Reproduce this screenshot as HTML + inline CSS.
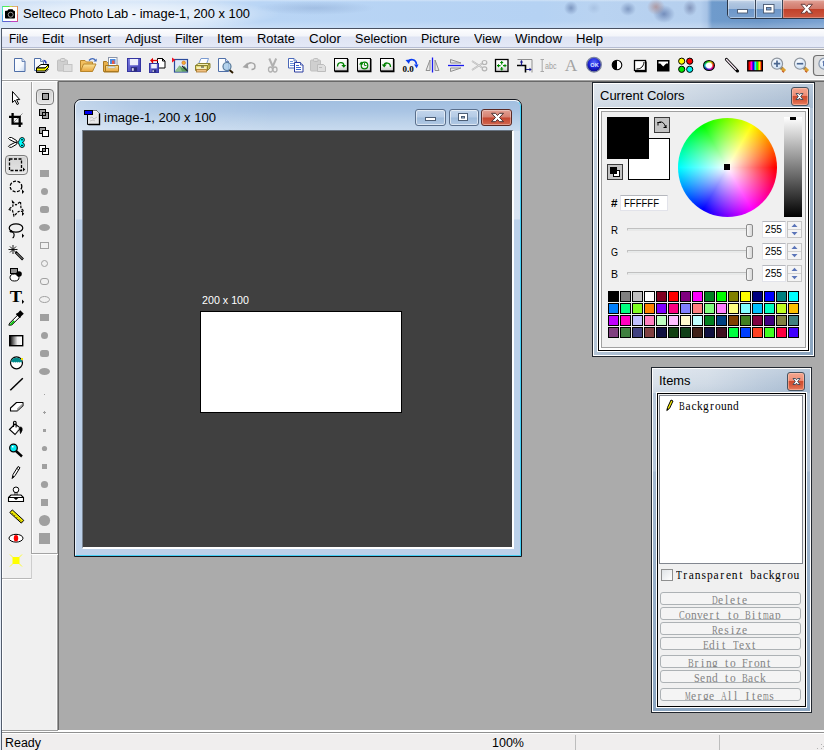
<!DOCTYPE html>
<html><head><meta charset="utf-8">
<style>
*{box-sizing:border-box;margin:0;padding:0}
html,body{width:824px;height:750px;overflow:hidden;background:#ababab;font-family:"Liberation Sans",sans-serif;}
.a{position:absolute}
svg{position:absolute;overflow:visible}

#title{left:0;top:0;width:824px;height:28px;background:
 radial-gradient(ellipse 150px 16px at 130px 14px,rgba(255,255,255,.75),rgba(255,255,255,.4) 60%,rgba(255,255,255,0) 100%),
 radial-gradient(ellipse 7px 7px at 571px 8px,rgba(105,130,175,.75),rgba(105,130,175,0) 100%),
 radial-gradient(ellipse 7px 6px at 594px 8px,rgba(150,175,210,.45),rgba(150,175,210,0) 100%),
 radial-gradient(ellipse 8px 7px at 628px 9px,rgba(105,130,175,.7),rgba(105,130,175,0) 100%),
 radial-gradient(ellipse 9px 8px at 656px 7px,rgba(170,130,130,.7),rgba(170,130,130,0) 100%),
 radial-gradient(ellipse 11px 9px at 664px 14px,rgba(95,120,170,.75),rgba(95,120,170,0) 100%),
 radial-gradient(ellipse 7px 8px at 690px 8px,rgba(110,125,165,.7),rgba(110,125,165,0) 100%),
 radial-gradient(ellipse 60px 7px at 315px 8px,rgba(120,150,195,.35),rgba(120,150,195,0) 100%),
 linear-gradient(rgba(255,255,255,.35) 0,rgba(255,255,255,0) 2px,rgba(255,255,255,0) 21px,rgba(255,255,255,.18) 27px),
 linear-gradient(90deg,#d3e3f6 0,#c9def6 200px,#b9d5f5 260px,#b5d2f3 540px,#b9d3f1 600px,#b5cfee 700px,#a6c2e5 707px,#6f9bcc 712px,#6b96c8 760px,#79a1d1 824px);}
#menubar{left:0;top:28px;width:824px;height:20px;background:linear-gradient(#fdfdfe 0,#f3f5fa 7px,#dfe4f3 8px,#e4e9f6 18px);border-top:1px solid #485060;border-bottom:1px solid #b5bcd2}
#toolbar{left:0;top:48px;width:824px;height:33px;background:linear-gradient(#f0f0f0 0,#f0f0f0 1px,#a0a0a0 1px,#a0a0a0 2px,#fff 2px,#fff 3px,#f0f0f0 3px,#f0f0f0 31px,#fff 31px,#fff 32px,#a0a0a0 32px)}
#tb-bot{display:none}
#lefttools{left:2px;top:81px;width:56px;height:649px;background:#f0f0f0;border-top:1px solid #fff;border-left:1px solid #fff;border-right:1px solid #a0a0a0;box-shadow:inset -1px 0 0 #fafafa}
#work{left:58px;top:81px;width:766px;height:649px;background:#ababab;border-left:1px solid #696969;border-top:1px solid #696969}
#status{left:0;top:730px;width:824px;height:20px;background:linear-gradient(#fff 0,#fff 2px,#909090 2px,#909090 3px,#fff 3px,#fff 4px,#f0eeee 4px);}
.wb{border:1px solid #3c4a5e;border-top:0;box-shadow:inset 0 0 0 1px rgba(255,255,255,.55)}

#doc{left:74px;top:99px;width:448px;height:458px;background:linear-gradient(#d5e2f2 0,#d9e4f2 119px,#bcd1ea 120px);border-radius:7px 7px 0 0;border:1px solid #14181f;overflow:hidden}
#doc .hl{left:0;top:0;right:0;bottom:0;border:1px solid;border-color:#f4f8fc #46d0f6 #46d0f6 #e8f0f9;border-radius:6px 6px 0 0}
#doc .cap{left:1px;top:1px;width:444px;height:30px;border-radius:5px 5px 0 0;background:
  linear-gradient(90deg,rgba(255,255,255,.35) 0,rgba(255,255,255,.15) 60px,rgba(255,255,255,0) 200px),
  linear-gradient(#a2bfe0 0,#aac5e4 35%,#bcd2ea 70%,#c9dbef 100%)}
#canvas{left:7px;top:30px;width:432px;height:419px;background:#404040;border:solid;border-width:1px 2px 2px 1px;border-color:#66717f #fff #fff #7b8796}
.cbtn{height:17px;border:1px solid #5a6f8c;border-radius:3px;background:linear-gradient(#c3d6ec 0,#b4cae5 48%,#9ebbdb 52%,#b2c9e4 100%);box-shadow:inset 0 0 0 1px rgba(255,255,255,.55)}
.cbtn.x{border-color:#5a2a25;background:linear-gradient(#e2a093 0,#d57f70 48%,#c4452f 52%,#d2674f 100%);box-shadow:inset 0 0 0 1px rgba(255,255,255,.35)}

#ledge{left:0;top:28px;width:2px;height:722px;background:linear-gradient(90deg,#e4ecf7 0,#e4ecf7 1px,#525c6c 1px)}
#lgray{left:2px;top:730px;width:56px;height:1px;background:#a0a0a0}
#mline{display:none}
#ltdiv{left:31px;top:82px;width:2px;height:472px;background:linear-gradient(90deg,#a3a3a3 0,#a3a3a3 1px,#fff 1px)}
#lth1{left:32px;top:553px;width:26px;height:2px;background:linear-gradient(#a3a3a3 0,#a3a3a3 1px,#fff 1px)}
#lth2{left:2px;top:578px;width:30px;height:2px;background:linear-gradient(#b8b8b8 0,#b8b8b8 1px,#fff 1px)}
.selbtn{border:1px solid #7c7c7c;border-radius:4px;background:linear-gradient(#d2d2d2,#e6e6e6);box-shadow:inset 0 0 0 1px rgba(255,255,255,.35)}

#hue{left:703px;top:60px;width:12px;height:11px;border-radius:50%;background:radial-gradient(ellipse,#fff 0,#fff 2.6px,rgba(255,255,255,0) 4.2px),conic-gradient(from 90deg,#e00,#c0c,#22c,#0bb,#0b0,#cc0,#e00);border:1px solid #000}

.pnl{border:1px solid #20262e;background:linear-gradient(90deg,rgba(255,255,255,.35) 0,rgba(255,255,255,0) 60%),linear-gradient(#b9c9da 0,#b4c5d8 56px,#a3b8cf 57px,#8ba5c0 100%)}
.pnl .hl{left:0;top:0;right:0;bottom:0;border:1px solid #fff}
.pnl .cap{left:1px;top:1px;right:1px;height:24px;background:linear-gradient(rgba(255,255,255,.18),rgba(255,255,255,0) 60%,rgba(120,150,180,.12)),linear-gradient(90deg,#d9e1ea 0,#d1dbe6 35%,#bccbdc 70%,#acbfd4 100%)}
.pnl .cl{border:1px solid #000;background:#f0f0f0;outline:1px solid #fff}
.pclose{width:18px;height:19px;border:1px solid #45525f;border-radius:3px;background:linear-gradient(#f3a58f 0,#f09880 30%,#ee8670 46%,#cf4c2e 50%,#d4583a 70%,#ea7c5e 100%);box-shadow:inset 0 0 0 1px rgba(255,200,180,.55)}
.bev{left:0;top:0;right:0;bottom:0;border:2px solid #fff}
.bev2{left:2px;top:2px;right:2px;bottom:2px;border:1px solid #a0a0a0}
.sw{width:11px;height:11px;border:1px solid #000}
.inp{background:#fff;border:1px solid #e2e3ea;border-top-color:#b5b7bd}
.trk{height:3px;border:1px solid #c0c0c0;border-bottom-color:#e8e8e8;background:#e7eaea;border-radius:1px}
.thm{width:7px;height:13px;border:1px solid #8c8c8c;border-radius:2px;background:linear-gradient(90deg,#f8f8f8,#d8d8d8)}
.spn{width:15px;height:17px;border:1px solid #c4c4c4;background:#f4f4f4}
.btn{left:2px;width:141px;height:13px;border:1px solid #adb2b5;border-radius:3px;background:#f4f4f4;overflow:hidden}

#wbtn{left:727px;top:-1px;width:98px;height:20px;border:1px solid #2a3648;border-radius:0 0 0 5px;overflow:hidden;background:#7ea3cf}
#wbtn div{position:absolute;top:0;height:18px}
#wbtn .n{background:linear-gradient(#c9d8ea 0,#afc5e0 20%,#a3bcdb 48%,#6d96c8 52%,#7aa0ce 100%);box-shadow:inset 0 0 0 1px rgba(255,255,255,.4)}
#wbtn .c{background:linear-gradient(#e3a79c 0,#d98d80 20%,#d27a6b 48%,#c2412a 52%,#cc5840 100%);box-shadow:inset 0 0 0 1px rgba(255,255,255,.3)}
#wbtn .s{width:1px;background:#3a4658}

</style></head><body>
<div id="title" class="a">
<span class="a" style="left:23px;top:7px;font:12.5px/15px 'Liberation Sans',sans-serif;color:#000;white-space:pre;transform-origin:0 0;transform:scaleX(1.0305);">Selteco Photo Lab - image-1, 200 x 100</span>
</div>
<div id="menubar" class="a">
<span class="a" style="left:9px;top:3px;font:12.5px/15px 'Liberation Sans',sans-serif;color:#000;white-space:pre;transform-origin:0 0;transform:scaleX(0.9433);">File</span>
<span class="a" style="left:42px;top:3px;font:12.5px/15px 'Liberation Sans',sans-serif;color:#000;white-space:pre;transform-origin:0 0;transform:scaleX(1.0214);">Edit</span>
<span class="a" style="left:78px;top:3px;font:12.5px/15px 'Liberation Sans',sans-serif;color:#000;white-space:pre;transform-origin:0 0;transform:scaleX(1.0556);">Insert</span>
<span class="a" style="left:125px;top:3px;font:12.5px/15px 'Liberation Sans',sans-serif;color:#000;white-space:pre;transform-origin:0 0;transform:scaleX(1.0362);">Adjust</span>
<span class="a" style="left:175px;top:3px;font:12.5px/15px 'Liberation Sans',sans-serif;color:#000;white-space:pre;transform-origin:0 0;transform:scaleX(1.0080);">Filter</span>
<span class="a" style="left:217px;top:3px;font:12.5px/15px 'Liberation Sans',sans-serif;color:#000;white-space:pre;transform-origin:0 0;transform:scaleX(1.0695);">Item</span>
<span class="a" style="left:257px;top:3px;font:12.5px/15px 'Liberation Sans',sans-serif;color:#000;white-space:pre;transform-origin:0 0;transform:scaleX(1.0318);">Rotate</span>
<span class="a" style="left:309px;top:3px;font:12.5px/15px 'Liberation Sans',sans-serif;color:#000;white-space:pre;transform-origin:0 0;transform:scaleX(1.0713);">Color</span>
<span class="a" style="left:355px;top:3px;font:12.5px/15px 'Liberation Sans',sans-serif;color:#000;white-space:pre;transform-origin:0 0;transform:scaleX(1.0112);">Selection</span>
<span class="a" style="left:421px;top:3px;font:12.5px/15px 'Liberation Sans',sans-serif;color:#000;white-space:pre;transform-origin:0 0;transform:scaleX(1.0025);">Picture</span>
<span class="a" style="left:474px;top:3px;font:12.5px/15px 'Liberation Sans',sans-serif;color:#000;white-space:pre;transform-origin:0 0;transform:scaleX(1.0049);">View</span>
<span class="a" style="left:515px;top:3px;font:12.5px/15px 'Liberation Sans',sans-serif;color:#000;white-space:pre;transform-origin:0 0;transform:scaleX(1.0572);">Window</span>
<span class="a" style="left:576px;top:3px;font:12.5px/15px 'Liberation Sans',sans-serif;color:#000;white-space:pre;transform-origin:0 0;transform:scaleX(1.0503);">Help</span>
</div>
<div id="toolbar" class="a"></div><div id="tb-bot" class="a"></div>
<div id="lefttools" class="a"></div>
<div id="work" class="a"></div>
<div id="status" class="a">
<span class="a" style="left:5px;top:6px;font:12.5px/15px 'Liberation Sans',sans-serif;color:#000;white-space:pre;transform-origin:0 0;transform:scaleX(0.9963);">Ready</span>
<span class="a" style="left:492px;top:6px;font:12.5px/15px 'Liberation Sans',sans-serif;color:#000;white-space:pre;transform-origin:0 0;transform:scaleX(1.0009);">100%</span>
<div class="a" style="left:575px;top:5px;width:1px;height:15px;background:#bdbdbd"></div><div class="a" style="left:719px;top:5px;width:1px;height:15px;background:#bdbdbd"></div>
<svg style="left:812px;top:8px" width="12" height="12" viewBox="0 0 12 12"><path d="M9 10h1v1h-1zM9 6h1v1h-1zM5 10h1v1h-1zM11 8h1v1h-1z" fill="#b0b0b0"/></svg>
</div>
<div id="doc" class="a"><div class="a cap"></div><div class="a hl"></div>
<svg style="left:9px;top:9px" width="18" height="18" viewBox="0 0 18 18"><path d="M3.5 1.5h9l3 3v11h-12z" fill="#e9e9e9" stroke="#000" stroke-width="1"/><path d="M4 2h8.5l2.5 2.5v10.5" fill="none" stroke="#fff" stroke-width="1"/><path d="M4.5 15.5h11v-11" fill="none" stroke="#000" stroke-width="1.4"/><rect x="0.5" y="1.5" width="8" height="4" fill="#0000f0" stroke="#000"/><path d="M6 9l2-1 2 2 3-2M6 12l3-1 2 1" stroke="#c4c4c4" fill="none"/></svg>
<span class="a" style="left:29px;top:11px;font:12.5px/15px 'Liberation Sans',sans-serif;color:#000;white-space:pre;transform-origin:0 0;transform:scaleX(1.0466);">image-1, 200 x 100</span>
<div class="a cbtn" style="left:340px;top:9px;width:31px"></div>
<div class="a cbtn" style="left:374px;top:9px;width:30px"></div>
<div class="a cbtn x" style="left:406px;top:9px;width:31px"></div>
<svg style="left:340px;top:9px" width="100" height="17" viewBox="0 0 100 17"><rect x="10.5" y="8.5" width="10" height="3" fill="#fff" stroke="#4d5e75"/><rect x="43.500" y="4.500" width="9" height="7" fill="#fff" stroke="#4d5e75"/><rect x="46.5" y="7.5" width="3" height="1.500" fill="#b6cbe5" stroke="#4d5e75"/><path d="M76.500 4.300h4l2 2.200 2-2.200h4l-4 4.200 4 4.200h-4l-2-2.200-2 2.200h-4l4-4.200z" fill="#fff" stroke="#4a3030" stroke-width="1"/></svg>
<div id="canvas" class="a">
<span class="a" style="left:119px;top:163px;font:10.5px/13px 'Liberation Sans',sans-serif;color:#fff;white-space:pre;transform-origin:0 0;transform:scaleX(1.0190);">200 x 100</span>
<div class="a" style="left:117px;top:180px;width:202px;height:102px;background:#fff;border:1px solid #000"></div>
</div></div>
<div id="ledge" class="a"></div><div id="lgray" class="a"></div><div id="mline" class="a"></div><div id="ltdiv" class="a"></div><div id="lth1" class="a"></div><div id="lth2" class="a"></div>
<div class="a" style="left:31px;top:555px;width:1px;height:24px;background:#cdcdcd"></div>
<div class="a selbtn" style="left:5px;top:155px;width:23px;height:20px"></div>
<div class="a selbtn" style="left:36px;top:89px;width:18px;height:16px"></div>
<svg style="left:0;top:0" width="824" height="750" viewBox="0 0 824 750"><rect x="42.5" y="93.5" width="6" height="6" fill="#a0a0a0" stroke="#000" stroke-width="1"/><rect x="39.5" y="109.5" width="6" height="6" fill="#a0a0a0" stroke="#000" stroke-width="1"/><rect x="42.5" y="112.5" width="6" height="6" fill="#a0a0a0" stroke="#000" stroke-width="1"/><rect x="39.5" y="109.5" width="6" height="6" fill="none" stroke="#000" stroke-width="1"/><rect x="39.5" y="127.5" width="6" height="6" fill="#a0a0a0" stroke="#000" stroke-width="1"/><rect x="42.5" y="130.5" width="6" height="6" fill="#fff" stroke="#000" stroke-width="1"/><rect x="39.5" y="145.5" width="6" height="6" fill="#fff" stroke="#000" stroke-width="1"/><rect x="42.5" y="148.5" width="6" height="6" fill="#fff" stroke="#000" stroke-width="1"/><rect x="43" y="149" width="2" height="2" fill="#909090"/><rect x="39.5" y="145.5" width="6" height="6" fill="none" stroke="#000" stroke-width="1"/><rect x="40" y="170" width="9" height="7" rx="0" fill="#a0a0a0"/><ellipse cx="44.500" cy="191.5" rx="3.5" ry="3.5" fill="#a0a0a0"/><rect x="40" y="206" width="9" height="7" rx="2.5" fill="#a0a0a0"/><ellipse cx="44.500" cy="227.5" rx="5.5" ry="3.5" fill="#a0a0a0"/><rect x="40.5" y="242.5" width="8" height="6" rx="0" fill="none" stroke="#a0a0a0"/><ellipse cx="44.500" cy="263.5" rx="3" ry="3" fill="none" stroke="#a0a0a0"/><rect x="40.5" y="278.5" width="8" height="6" rx="2.5" fill="none" stroke="#a0a0a0"/><ellipse cx="44.500" cy="299.5" rx="5" ry="3" fill="none" stroke="#a0a0a0"/><rect x="40" y="314" width="9" height="7" rx="0" fill="#a0a0a0"/><ellipse cx="44.500" cy="335.5" rx="3.5" ry="3.5" fill="#a0a0a0"/><rect x="40" y="350" width="9" height="7" rx="2.5" fill="#a0a0a0"/><ellipse cx="44.500" cy="371.5" rx="5.5" ry="3.5" fill="#a0a0a0"/><rect x="44" y="394" width="1" height="1" fill="#a0a0a0"/><path d="M44 411h1v1h1v1h-1v1h-1v-1h-1v-1h1z" fill="#a0a0a0"/><rect x="43" y="429" width="3" height="3" fill="#a0a0a0"/><circle cx="44.500" cy="448.500" r="2.6" fill="#a0a0a0"/><rect x="42" y="464" width="5" height="5" fill="#a0a0a0"/><circle cx="44.500" cy="484.500" r="3.6" fill="#a0a0a0"/><rect x="41" y="499" width="7" height="7" fill="#a0a0a0"/><circle cx="44.500" cy="520.500" r="5.6" fill="#a0a0a0"/><rect x="39" y="533" width="11" height="11" fill="#a0a0a0"/><path d="M12.500 91.500v11l2.500-2.300 2 4.300 1.600-.7-2-4.200h3.200z" fill="#fff" stroke="#000" stroke-width="1" stroke-linejoin="miter"/><path d="M22.500 113.500L13 123" stroke="#909090" stroke-width="1"/><path d="M12.600 113v10.600H22.500M9 116.800h10.700v10.200" fill="none" stroke="#000" stroke-width="2.300"/><path d="M8.500 138.500l1-1h2l5 3 .8 1.600-2.300.2-5.500-2.800z" fill="#fff" stroke="#000" stroke-width="1"/><path d="M8.500 146.300l1 1h2l5-3 .8-1.600-2.300-.2-5.500 2.800z" fill="#fff" stroke="#000" stroke-width="1"/><path d="M18.300 142.500l1.200-3q.6-2 2.600-2 2.300 0 2.300 2.300 0 2.300-2.200 2.700 2.200.4 2.200 2.700 0 2.300-2.300 2.300-2 0-2.600-2z" fill="#00ffff" stroke="#000" stroke-width=".9"/><rect x="21" y="139.300" width="2" height="1" fill="#000"/><rect x="21" y="144.800" width="2" height="1" fill="#000"/><rect x="9.500" y="159" width="12" height="11.500" fill="none" stroke="#000" stroke-width="1.300" stroke-dasharray="3 1.500"/><path d="M23 167.500l2.200 2-2.200 2z" fill="#000"/><ellipse cx="16" cy="186.500" rx="5.800" ry="5.300" fill="none" stroke="#000" stroke-width="1.300" stroke-dasharray="3 1.500"/><path d="M22 189.500l2.200 2.200-2.200 2.200z" fill="#000"/><path d="M12.500 201.500l3.500 3.500 4.500-3.500.5 7 3 2.500-5.500.5-4.500 4.500-1.500-5.500-4-1 4.500-3.500z" fill="none" stroke="#000" stroke-width="1.200" stroke-dasharray="2.500 1.200"/><path d="M22 211.500l2.200 2.200-2.200 2.200z" fill="#000"/><ellipse cx="16" cy="228" rx="6.800" ry="4.200" fill="none" stroke="#000" stroke-width="1.200"/><path d="M10.500 231.500c3 .5 4 2 3.500 4.500-.2 1-.8 1.800-1.500 1.500" fill="none" stroke="#000" stroke-width="1.200"/><circle cx="11" cy="231.200" r="1.300" fill="#000"/><path d="M22 233.500l2.200 2.200-2.200 2.200z" fill="#000"/><path d="M13 245v9M8.500 249.500h9M10 246.500l6 6M16 246.500l-6 6" stroke="#000" stroke-width=".9"/><path d="M15.500 252l7.500 7.500" stroke="#000" stroke-width="2.600"/><path d="M16.500 253l6 6" stroke="#d0d0d0" stroke-width=".8"/><rect x="10.500" y="268.500" width="7" height="5" fill="#909090" stroke="#000"/><ellipse cx="14.500" cy="277.500" rx="4.500" ry="3.500" fill="#fff" stroke="#000"/><circle cx="19" cy="274" r="2.800" fill="#000"/><text x="9.800" y="302" font-family="Liberation Serif" font-weight="bold" font-size="17.500" fill="#000" textLength="12.300" lengthAdjust="spacingAndGlyphs">T</text><path d="M22 299.500l2.200 2.200-2.200 2.200z" fill="#000"/><path d="M8.800 325.200l1-2.200 8-8 2 2-8 8z" fill="#fff" stroke="#000" stroke-width="1"/><path d="M9.500 324.500l4.200-4.200 1.200 1.200-3.800 3.800z" fill="#00c000"/><path d="M16.500 313.500l4 4M18 314l2.300-2.500 2.200 2.200-2.400 2.300z" stroke="#000" stroke-width="1.800" fill="#000"/><defs><linearGradient id="gr1"><stop offset="0" stop-color="#000"/><stop offset=".25" stop-color="#666"/><stop offset=".6" stop-color="#eee"/><stop offset="1" stop-color="#fff"/></linearGradient></defs><rect x="9.700" y="335.700" width="13" height="10" fill="url(#gr1)" stroke="#000" stroke-width="1.400"/><circle cx="16.500" cy="362.800" r="6" fill="#fff" stroke="#000" stroke-width="1.200"/><path d="M10.800 361.800a6 6 0 0 1 11.400 0l-1 .9-1-.9-1 .9-1-.9-1 .9-1-.9-1 .9-1-.9-1 .9-1-.9z" fill="#008a8a"/><rect x="21" y="358" width="2" height="2" fill="#f0e000"/><path d="M10.300 390.300L22.800 378.300" stroke="#000" stroke-width="1.500"/><path d="M10.500 408l6-5.500h6.500v3l-6 5.500h-6.500z" fill="#fff" stroke="#000" stroke-width="1.100" stroke-linejoin="round"/><path d="M17 408.500l5.500-5v2.500l-5.500 5z" fill="#a0a0a0"/><path d="M9.500 429.500l5.500-5.500 5.500 4-5.500 6.500z" fill="#fff" stroke="#000" stroke-width="1.100"/><path d="M16 433l4.500-5.500-1-1z" fill="#a0a0a0"/><path d="M13.500 427v-4.500a1.300 1.300 0 0 1 2.600 0v5" fill="none" stroke="#000" stroke-width="1.100"/><path d="M19.500 427.500c2-1 3 0 2.500 3l-1.500 3z" fill="#000" stroke="#000" stroke-width=".8"/><path d="M16 451l6 5.500" stroke="#000" stroke-width="2.400"/><circle cx="13.500" cy="448" r="3.800" fill="#00e8f0" stroke="#000" stroke-width="1.300"/><rect x="12" y="446" width="1.500" height="1.500" fill="#fff"/><path d="M12.200 478.500l.8-4 5-8 2 1.200-5 8z" fill="#fff" stroke="#000" stroke-width="1"/><path d="M12.200 478.500l.6-2.800 1.700 1z" fill="#000"/><path d="M16.800 468.500l2 1.200" stroke="#000" stroke-width=".8"/><circle cx="16" cy="489.800" r="2.800" fill="#fff" stroke="#000"/><rect x="15" y="492.500" width="2" height="3" fill="#fff" stroke="#000" stroke-width=".8"/><path d="M8.500 497.500l2.500-2.500h10l2.500 2.500v4h-15z" fill="#fff" stroke="#000" stroke-width="1.100"/><path d="M8.500 497.500h15" stroke="#000"/><path d="M13 497.500h6l-3 2.500z" fill="#000"/><path d="M9.800 512.600l2.500-2.700 11.500 10.500-2.500 2.700z" fill="#f0e800" stroke="#000" stroke-width="1"/><path d="M12.500 513.500l.7.700M14.500 515.300l.7.700M16.500 517.100l.7.700M18.500 518.900l.7.700M20.300 520.600l.7.700" stroke="#000" stroke-width=".9"/><ellipse cx="16" cy="538.200" rx="7" ry="3.900" fill="#fff" stroke="#000" stroke-width="1"/><ellipse cx="16" cy="538.200" rx="2.200" ry="3.200" fill="#ff0000"/><rect x="12.500" y="557" width="7" height="7" fill="#ffff00"/><path d="M10 554.500l3 3M22 554.500l-3 3M10 566.500l3-3M22 566.500l-3-3" stroke="#ffff00" stroke-width=".8"/></svg>
<div id="hue" class="a"></div>
<svg style="left:0;top:0" width="824" height="750" viewBox="0 0 824 750"><defs>
<linearGradient id="pg" x1="0" y1="0" x2="1" y2="1"><stop offset="0" stop-color="#fff"/><stop offset=".6" stop-color="#f4f8fd"/><stop offset="1" stop-color="#c4d6f0"/></linearGradient>
<linearGradient id="fo" x1="0" y1="0" x2="0" y2="1"><stop offset="0" stop-color="#fbe59a"/><stop offset="1" stop-color="#e8a33a"/></linearGradient>
<linearGradient id="fl" x1="0" y1="0" x2="1" y2="1"><stop offset="0" stop-color="#7a7ae0"/><stop offset="1" stop-color="#3c3cb0"/></linearGradient>
<linearGradient id="bt" x1="0" y1="0" x2="0" y2="1"><stop offset="0" stop-color="#fff"/><stop offset=".6" stop-color="#f4f4f4"/><stop offset="1" stop-color="#c8c8c8"/></linearGradient>
<radialGradient id="ok" cx=".5" cy=".35" r=".65"><stop offset="0" stop-color="#5a6cff"/><stop offset=".55" stop-color="#1c22d8"/><stop offset="1" stop-color="#0a0a80"/></radialGradient>
<radialGradient id="lens" cx=".4" cy=".35" r=".7"><stop offset="0" stop-color="#fff"/><stop offset="1" stop-color="#c6dcf4"/></radialGradient>
<linearGradient id="spec"><stop offset="0" stop-color="#f00"/><stop offset=".12" stop-color="#f00"/><stop offset=".25" stop-color="#f0f"/><stop offset=".4" stop-color="#00f"/><stop offset=".55" stop-color="#0ff"/><stop offset=".7" stop-color="#0f0"/><stop offset=".84" stop-color="#ff0"/><stop offset=".95" stop-color="#f00"/></linearGradient>
</defs><path d="M14.5 58.5h7.5l3 3v10h-10.5z" fill="url(#pg)" stroke="#4f6fa8"/><path d="M22 58.5v3h3" fill="#dbe6f6" stroke="#4f6fa8" stroke-width=".8"/><path d="M34.5 58.5h6l3 3v9h-9z" fill="url(#pg)" stroke="#4f6fa8"/><path d="M40.5 58.5v3h3" fill="#dbe6f6" stroke="#4f6fa8" stroke-width=".8"/><path d="M43.500 60.500c1.500 0 2.500 1 2.500 3" fill="none" stroke="#2b3fc0" stroke-width="1.500"/><path d="M44 64h4l-2 2.500z" fill="#2b3fc0"/><path d="M36.500 68l4.500-3.500h7.500l-3.500 3.500z" fill="#fff" stroke="#000"/><path d="M36.500 68v3h8.500l3.500-3.500v-3l-3.500 3.500z" fill="#f0f000" stroke="#000" stroke-linejoin="round"/><path d="M36.500 71v1.500h8.500l3.500-3.500" fill="none" stroke="#000"/><rect x="57.500" y="60" width="10" height="11" rx="1" fill="#cfcfcf" stroke="#c0c0c0"/><rect x="60.500" y="58.500" width="4.500" height="3" rx="1" fill="#dcdcdc" stroke="#bdbdbd"/><rect x="63.500" y="64.500" width="8.500" height="7" fill="#dedede" stroke="#c4c4c4"/><path d="M80.500 71v-10.500h4.500l1.500 1.500h6v9z" fill="#f2c060" stroke="#b8862c"/><path d="M80.500 71.500l3-7.500h12.500l-3.500 7.500z" fill="url(#fo)" stroke="#b8862c" stroke-linejoin="round"/><path d="M89 60.500c2-2.500 5-2.500 6.500 0" fill="none" stroke="#3f66b8" stroke-width="1.300"/><path d="M93.500 61.500h3.200v-3z" fill="#3f66b8"/><path d="M103.500 71.500v-10h3l1 1h2v9z" fill="#e8b04a" stroke="#a87820"/><rect x="108.500" y="57.500" width="8.500" height="9" fill="#fff" stroke="#8a94a8"/><rect x="110" y="59" width="5.500" height="5" fill="#4a8ae0"/><rect x="112" y="60.500" width="2.500" height="3.500" fill="#e85a4a"/><path d="M105.500 71.500v-6h13v6z" fill="url(#fo)" stroke="#a87820"/><rect x="108" y="66.500" width="7" height="1.500" fill="#eef4ff" stroke="#9aa" stroke-width=".5"/><path d="M104 72h14.500" stroke="#a87820"/><rect x="127.5" y="58.5" width="13" height="13" fill="url(#fl)" stroke="#3434a0"/><rect x="129.907" y="59" width="8.18519" height="6.25926" fill="#eef0fa"/><rect x="130.87" y="67.1667" width="6.25926" height="4.33333" fill="#2a2a7a"/><rect x="131.833" y="68.1296" width="1.92593" height="2.6963" fill="#d8d8f0"/><path d="M157.500 58.500h5l2.500 2.500v7h-7.500z" fill="#fff" stroke="#000"/><path d="M162.500 58.500v2.500h2.500" fill="none" stroke="#000"/><rect x="149.5" y="63.5" width="9" height="9" fill="url(#fl)" stroke="#3434a0"/><rect x="151.167" y="64" width="5.66667" height="4.33333" fill="#eef0fa"/><rect x="151.833" y="69.5" width="4.33333" height="3" fill="#2a2a7a"/><rect x="152.5" y="70.1667" width="1.33333" height="1.86667" fill="#d8d8f0"/><path d="M152 60.500h6" stroke="#e00000" stroke-width="1.300"/><path d="M150 60.500l3-2.800v5.600z" fill="#e00000"/><path d="M152.500 60v3" stroke="#e00000" stroke-width="1.300"/><rect x="174.500" y="59.500" width="13" height="12.500" fill="#dfeaf8" stroke="#2b4a9a" stroke-width="1.200"/><path d="M175 71.500l4.500-6 3 2.500 2-2 3 3.500v2z" fill="#5aa05a"/><path d="M175 71.500l4.500-6 2.500 6z" fill="#8fc08f"/><path d="M182 66l5.500 5" stroke="#223" stroke-width="1.200"/><circle cx="183.700" cy="62.800" r="1.800" fill="#f2b030" stroke="#d06020" stroke-width=".6"/><path d="M172 57.500l3.500 2.500-3.500 2.500z" fill="#f01020"/><path d="M198.500 64l2.500-5.500h7.500l-2 5.500z" fill="#fff" stroke="#7a9ad0"/><path d="M195.500 65.500l3-2h11.500l-2.500 2z" fill="#f2eeb0" stroke="#8a8230"/><path d="M195.500 65.500h12v5h-12z" fill="#e6dc78" stroke="#8a8230"/><path d="M207.500 65.500l2.500-2v4.500l-2.500 2.500z" fill="#c8bc58" stroke="#8a8230"/><rect x="196.500" y="69.500" width="10" height="2.500" fill="#f0c080" stroke="#a87830" stroke-width=".8"/><path d="M197 68h9" stroke="#fff" stroke-width="1"/><rect x="201" y="66.500" width="3" height="1" fill="#3a3a3a"/><path d="M218.5 58.5h7l3 3v10h-10z" fill="url(#pg)" stroke="#4f6fa8"/><path d="M225.5 58.5v3h3" fill="#dbe6f6" stroke="#4f6fa8" stroke-width=".8"/><path d="M229.500 70l3.500 3" stroke="#2a1a00" stroke-width="2"/><circle cx="227" cy="66.500" r="4" fill="#a9cdea" fill-opacity=".85" stroke="#587a9a" stroke-width="1.200"/><path d="M246.500 66c2-4.500 8.500-4 8.500.5 0 2-1.500 3-3.500 3" fill="none" stroke="#a4a4a4" stroke-width="1.500"/><path d="M242.500 67.300l5-4.800 1 6z" fill="#a4a4a4"/><path d="M269.300 58.500l3.700 8.500M276.200 58.500l-3.700 8.500" stroke="#b0b0b0" stroke-width="2"/><ellipse cx="270.500" cy="69.500" rx="2" ry="2.500" fill="#f0f0f0" stroke="#b0b0b0" stroke-width="1.300"/><ellipse cx="275" cy="69.500" rx="2" ry="2.500" fill="#f0f0f0" stroke="#b0b0b0" stroke-width="1.300"/><path d="M288.5 58.5h5.5l2.5 2.5v7h-8z" fill="#fff" stroke="#4a68b8"/><path d="M294 58.5v2.5h2.5" fill="#dbe6f6" stroke="#4a68b8" stroke-width=".8"/><path d="M290 61.500h3M290 63.500h4.500M290 65.500h4.500" stroke="#5a86d8" stroke-width=".9"/><path d="M294.5 62.5h6l2.5 2.5v7h-8.5z" fill="#fff" stroke="#2a3ca0"/><path d="M300.5 62.5v2.5h2.5" fill="#dbe6f6" stroke="#2a3ca0" stroke-width=".8"/><path d="M296 65.500h3M296 67.500h5M296 69.500h5" stroke="#3a66d0" stroke-width="1"/><rect x="310.500" y="60" width="10" height="11" rx="1" fill="#cfcfcf" stroke="#c0c0c0"/><rect x="313.500" y="58.500" width="4.500" height="3" rx="1" fill="#dcdcdc" stroke="#bdbdbd"/><path d="M317.500 64.500h6l2 2v5h-8z" fill="#dedede" stroke="#bcbcbc"/><path d="M319 67.500h3" stroke="#bcbcbc"/><rect x="334.5" y="58.500" width="13" height="12.500" fill="url(#bt)" stroke="#000"/><path d="M347.7 59v12.500h-13" fill="none" stroke="#000" stroke-width="1.600"/><path d="M337.500 66.500c0-5 6-5 6.500-1" fill="none" stroke="#008000" stroke-width="1.300"/><path d="M341.300 65h5l-2.500 2.800z" fill="#008000"/><rect x="357.5" y="58.500" width="13" height="12.500" fill="url(#bt)" stroke="#000"/><path d="M370.7 59v12.500h-13" fill="none" stroke="#000" stroke-width="1.600"/><circle cx="364.500" cy="65.500" r="3.300" fill="none" stroke="#008000" stroke-width="1.200"/><path d="M359 64.500h4.500l-2.300-3z" fill="#008000"/><path d="M364.500 63v2.500h2" fill="none" stroke="#008000" stroke-width=".9"/><rect x="380.5" y="58.500" width="13" height="12.500" fill="url(#bt)" stroke="#000"/><path d="M393.7 59v12.500h-13" fill="none" stroke="#000" stroke-width="1.600"/><path d="M390.500 67c0-5-6-5-6.500-1.500" fill="none" stroke="#008000" stroke-width="1.300"/><path d="M381.700 64.500h5l-2.500 3z" fill="#008000"/><text x="402.500" y="72" font-family="Liberation Serif" font-weight="bold" font-size="9" fill="#000">0.0</text><path d="M408.500 62c1-3.500 7.500-3.500 8 2.500" fill="none" stroke="#0a3cf0" stroke-width="1.600"/><path d="M405.500 60l4.500-.5-1 4.500z" fill="#0a3cf0"/><path d="M414 64.500h4.500l-1.800 3.800z" fill="#0a3cf0"/><path d="M432.500 57.500v15" stroke="#1a1af0" stroke-width="1.300"/><path d="M430 60v10.500h-4z" fill="#e8e8e8" stroke="#909090" stroke-width="1"/><path d="M435 60v10.500h4z" fill="#e8e8e8" stroke="#909090" stroke-width="1"/><path d="M448 65.500h16" stroke="#1a1af0" stroke-width="1.300"/><path d="M450.500 63h10.500l-10.500-3.500z" fill="#e8e8e8" stroke="#909090"/><path d="M450.500 68h10.500l-10.500 3.500z" fill="#e8e8e8" stroke="#909090"/><path d="M472 61l10 6.500M472 70l10-6.500" stroke="#b4b4b4" stroke-width="1.600"/><path d="M472 61l10 6.500M472 70l10-6.500" stroke="#f6f6f6" stroke-width=".5"/><ellipse cx="484.500" cy="62.500" rx="2.300" ry="2" fill="#f0f0f0" stroke="#b4b4b4" stroke-width="1.200"/><ellipse cx="484.500" cy="68.800" rx="2.300" ry="2" fill="#f0f0f0" stroke="#b4b4b4" stroke-width="1.200"/><rect x="495.500" y="59.500" width="12.500" height="12" fill="url(#bt)" stroke="#000" stroke-width="1.300"/><path d="M501.700 61v3.500M501.700 67v3.500M497 65.700h3.500M503 65.700h3.500" stroke="#008a00" stroke-width="1.200"/><path d="M500.200 62.500h3M500.200 69h3M498.500 64.200v3M505 64.200v3" stroke="#008a00" stroke-width="1"/><path d="M517.500 59.500h14.500v13" fill="none" stroke="#909090" stroke-width="1"/><path d="M517 65.500h8.500v7" fill="none" stroke="#000" stroke-width="1.600"/><path d="M521.500 60.500v5M526 69.500h5" stroke="#1a1a90" stroke-width="1.200"/><path d="M519.800 62.500l1.700-2.200 1.700 2.200zM529.500 67.800l2.200 1.700-2.200 1.700z" fill="#1a1a90"/><path d="M540.500 59.500h3.500M540.500 71.500h3.500M542.200 59.500v12" stroke="#a8a8a8" stroke-width="1"/><text x="545" y="69" font-family="Liberation Sans" font-size="8.500" fill="#a0a0a0" textLength="11.500" lengthAdjust="spacingAndGlyphs">abc</text><text x="564.800" y="71" font-family="Liberation Serif" font-size="16.500" fill="#a2a2a2" textLength="12.500" lengthAdjust="spacingAndGlyphs">A</text><circle cx="594" cy="64.700" r="7.300" fill="url(#ok)" stroke="#7c84a0" stroke-width="1.300"/><text x="590.300" y="66.800" font-family="Liberation Sans" font-weight="bold" font-size="5.600" fill="#dfe6ff">OK</text><circle cx="617" cy="65" r="4.800" fill="#fff" stroke="#000" stroke-width="1.100"/><path d="M617 60.200a4.800 4.800 0 0 0 0 9.600z" fill="#000"/><rect x="634.500" y="60.500" width="11" height="10" fill="#fff" stroke="#000" stroke-width="1.300"/><path d="M646 61.500v10h-11" fill="none" stroke="#000" stroke-width="1.300"/><path d="M636.500 69c5 0 7-3 7.500-7" fill="none" stroke="#000" stroke-width="1"/><rect x="657.500" y="60.500" width="11.500" height="10.500" fill="#000" stroke="#000"/><path d="M658.500 61.500h9.500v2h-1.800l-3 3-2.900-3h-1.800z" fill="#fff"/><circle cx="681.7" cy="61.2" r="3.100" fill="#ffff00" stroke="#000" stroke-width="1"/><circle cx="689.7" cy="61.2" r="3.100" fill="#ff0000" stroke="#000" stroke-width="1"/><circle cx="681.7" cy="69.3" r="3.100" fill="#00e800" stroke="#000" stroke-width="1"/><circle cx="689.7" cy="69.3" r="3.100" fill="#00f0f0" stroke="#000" stroke-width="1"/><path d="M726.500 59.500l10 10.500" stroke="#000" stroke-width="3.200" stroke-linecap="round"/><path d="M726.500 59.500l9.500 10" stroke="#f4e4f0" stroke-width="1.400" stroke-linecap="round"/><circle cx="737.500" cy="71" r="1.600" fill="#000"/><rect x="747.800" y="60.800" width="14.500" height="10" fill="#f00" stroke="#000" stroke-width="1.400"/><rect x="750.5" y="61.500" width="2" height="8.600" fill="#f0f"/><rect x="752.5" y="61.500" width="2" height="8.600" fill="#00f"/><rect x="754.5" y="61.500" width="2" height="8.600" fill="#0ff"/><rect x="756.5" y="61.500" width="2" height="8.600" fill="#0f0"/><rect x="758.5" y="61.500" width="2" height="8.600" fill="#ff0"/><path d="M781.3 67.800l3.600 3.500" stroke="#dca032" stroke-width="3.400"/><path d="M782.2 70.800l1.600 1.600" stroke="#c0502a" stroke-width="1.200"/><path d="M780.6 67.300l1.300 1.300" stroke="#8a7a5a" stroke-width="3"/><circle cx="777" cy="63.700" r="5.600" fill="url(#lens)" stroke="#8e949c" stroke-width="1.100"/><path d="M773.800 63.700h6.400M777 60.500v6.400" stroke="#4a6690" stroke-width="1.700"/><path d="M804.3 67.800l3.600 3.500" stroke="#dca032" stroke-width="3.400"/><path d="M805.2 70.800l1.600 1.600" stroke="#c0502a" stroke-width="1.200"/><path d="M803.6 67.300l1.300 1.300" stroke="#8a7a5a" stroke-width="3"/><circle cx="800" cy="63.700" r="5.600" fill="url(#lens)" stroke="#8e949c" stroke-width="1.100"/><path d="M796.800 63.700h6.400" stroke="#4a6690" stroke-width="1.700"/><rect x="813.500" y="55.500" width="22" height="20" rx="3.500" fill="#e0e0e0" stroke="#707070" stroke-width="1.200"/><circle cx="824.500" cy="63.700" r="5.600" fill="url(#lens)" stroke="#8c9aae" stroke-width="1.300"/><path d="M822.500 62l1.200-.8v5" stroke="#3a5a9a" stroke-width="1" fill="none"/></svg>
<div class="a pnl" style="left:592px;top:82px;width:223px;height:275px"><div class="a cap"></div><div class="a hl"></div>
<span class="a" style="left:7px;top:6px;font:12.5px/15px 'Liberation Sans',sans-serif;color:#000;white-space:pre;transform-origin:0 0;transform:scaleX(1.0397);">Current Colors</span>
<div class="a pclose" style="left:198px;top:4px"></div>
<svg style="left:203px;top:10px" width="7" height="7" viewBox="0 0 7 7"><path d="M0 .5h2.500l1 1.300 1-1.300h2.500l-2.300 3 2.300 3h-2.500l-1-1.400-1 1.400h-2.500l2.300-3z" fill="#fff" stroke="#3a4656" stroke-width=".9"/></svg>
<div class="a cl" style="left:5px;top:25px;width:211px;height:243px"><div class="a bev"></div><div class="a bev2"></div>
<div class="a" style="left:29px;top:29px;width:42px;height:42px;background:#fff;border:1px solid #000"></div>
<div class="a" style="left:8px;top:8px;width:42px;height:42px;background:#000"></div>
<div class="a" style="left:55px;top:8px;width:16px;height:16px;background:#c3c3c3;border:1px solid #3c3c3c"></div>
<svg style="left:55px;top:8px" width="16" height="16" viewBox="0 0 16 16"><path d="M4.500 5.500c3-1.500 6 0 7 5" fill="none" stroke="#000" stroke-width="1"/><path d="M3.500 5.500h3.500M4 5v3.500M9.500 10.500h3M12 8v3" stroke="#000" stroke-width="1" fill="none"/></svg>
<div class="a" style="left:8px;top:55px;width:16px;height:16px;background:#c3c3c3;border:1px solid #3c3c3c"></div>
<div class="a" style="left:14px;top:61px;width:7px;height:7px;background:#fff;border:1px solid #000"></div>
<div class="a" style="left:11px;top:58px;width:7px;height:7px;background:#000"></div>
<div class="a" style="left:79px;top:9px;width:99px;height:99px;border-radius:50%;background:radial-gradient(circle closest-side,#fff 0,rgba(255,255,255,.68) 30%,rgba(255,255,255,.36) 60%,rgba(255,255,255,0) 96%),conic-gradient(from 90deg,#f00,#f0f,#00f,#0ff,#0f0,#ff0,#f00)"></div>
<div class="a" style="left:125px;top:55px;width:6px;height:6px;background:#000"></div>
<div class="a" style="left:185px;top:8px;width:18px;height:100px;background:linear-gradient(#fff,#000)"></div>
<div class="a" style="left:191px;top:8px;width:6px;height:3px;background:#000"></div>
<span class="a" style="left:12px;top:88px;font:11px/13px 'Liberation Sans',sans-serif;font-weight:bold;color:#000;white-space:pre;transform-origin:0 0;transform:scaleX(1.0625);">#</span>
<div class="a inp" style="left:21px;top:86px;width:48px;height:16px"></div>
<span class="a" style="left:25px;top:88px;font:11px/13px 'Liberation Sans',sans-serif;color:#000;white-space:pre;transform-origin:0 0;transform:scaleX(0.8682);">FFFFFF</span>
<span class="a" style="left:12px;top:115px;font:11px/13px 'Liberation Sans',sans-serif;color:#000;white-space:pre;transform-origin:0 0;transform:scaleX(0.8812);">R</span>
<div class="a trk" style="left:28px;top:119px;width:124px"></div>
<div class="a thm" style="left:147px;top:115px"></div>
<div class="a inp" style="left:163px;top:112px;width:24px;height:17px"></div>
<span class="a" style="left:166px;top:114px;font:11px/13px 'Liberation Sans',sans-serif;color:#000;white-space:pre;transform-origin:0 0;transform:scaleX(0.9263);">255</span>
<div class="a spn" style="left:188px;top:112px"></div>
<svg style="left:188px;top:112px" width="15" height="17" viewBox="0 0 15 17"><path d="M1 8.500h13" stroke="#d0d0d0"/><path d="M4.500 6l3-3.200 3 3.200z" fill="#5a74b8"/><path d="M4.500 11l3 3.200 3-3.200z" fill="#5a74b8"/></svg>
<span class="a" style="left:12px;top:137px;font:11px/13px 'Liberation Sans',sans-serif;color:#000;white-space:pre;transform-origin:0 0;transform:scaleX(0.8181);">G</span>
<div class="a trk" style="left:28px;top:141px;width:124px"></div>
<div class="a thm" style="left:147px;top:137px"></div>
<div class="a inp" style="left:163px;top:134px;width:24px;height:17px"></div>
<span class="a" style="left:166px;top:136px;font:11px/13px 'Liberation Sans',sans-serif;color:#000;white-space:pre;transform-origin:0 0;transform:scaleX(0.9263);">255</span>
<div class="a spn" style="left:188px;top:134px"></div>
<svg style="left:188px;top:134px" width="15" height="17" viewBox="0 0 15 17"><path d="M1 8.500h13" stroke="#d0d0d0"/><path d="M4.500 6l3-3.200 3 3.200z" fill="#5a74b8"/><path d="M4.500 11l3 3.200 3-3.200z" fill="#5a74b8"/></svg>
<span class="a" style="left:12px;top:159px;font:11px/13px 'Liberation Sans',sans-serif;color:#000;white-space:pre;transform-origin:0 0;transform:scaleX(0.9541);">B</span>
<div class="a trk" style="left:28px;top:163px;width:124px"></div>
<div class="a thm" style="left:147px;top:159px"></div>
<div class="a inp" style="left:163px;top:156px;width:24px;height:17px"></div>
<span class="a" style="left:166px;top:158px;font:11px/13px 'Liberation Sans',sans-serif;color:#000;white-space:pre;transform-origin:0 0;transform:scaleX(0.9263);">255</span>
<div class="a spn" style="left:188px;top:156px"></div>
<svg style="left:188px;top:156px" width="15" height="17" viewBox="0 0 15 17"><path d="M1 8.500h13" stroke="#d0d0d0"/><path d="M4.500 6l3-3.200 3 3.200z" fill="#5a74b8"/><path d="M4.500 11l3 3.200 3-3.200z" fill="#5a74b8"/></svg>
<div class="a sw" style="left:9px;top:182px;background:#000"></div>
<div class="a sw" style="left:21px;top:182px;background:#808080"></div>
<div class="a sw" style="left:33px;top:182px;background:#c0c0c0"></div>
<div class="a sw" style="left:45px;top:182px;background:#fff"></div>
<div class="a sw" style="left:57px;top:182px;background:#800020"></div>
<div class="a sw" style="left:69px;top:182px;background:#f00"></div>
<div class="a sw" style="left:81px;top:182px;background:#800080"></div>
<div class="a sw" style="left:93px;top:182px;background:#f0f"></div>
<div class="a sw" style="left:105px;top:182px;background:#008020"></div>
<div class="a sw" style="left:117px;top:182px;background:#0f0"></div>
<div class="a sw" style="left:129px;top:182px;background:#808000"></div>
<div class="a sw" style="left:141px;top:182px;background:#ff0"></div>
<div class="a sw" style="left:153px;top:182px;background:#000080"></div>
<div class="a sw" style="left:165px;top:182px;background:#00f"></div>
<div class="a sw" style="left:177px;top:182px;background:#008080"></div>
<div class="a sw" style="left:189px;top:182px;background:#0ff"></div>
<div class="a sw" style="left:9px;top:194px;background:#0080ff"></div>
<div class="a sw" style="left:21px;top:194px;background:#00ff80"></div>
<div class="a sw" style="left:33px;top:194px;background:#80ff20"></div>
<div class="a sw" style="left:45px;top:194px;background:#ff8000"></div>
<div class="a sw" style="left:57px;top:194px;background:#8000ff"></div>
<div class="a sw" style="left:69px;top:194px;background:#ff0080"></div>
<div class="a sw" style="left:81px;top:194px;background:#8080ff"></div>
<div class="a sw" style="left:93px;top:194px;background:#ff8080"></div>
<div class="a sw" style="left:105px;top:194px;background:#80ff80"></div>
<div class="a sw" style="left:117px;top:194px;background:#ff80ff"></div>
<div class="a sw" style="left:129px;top:194px;background:#ffff80"></div>
<div class="a sw" style="left:141px;top:194px;background:#80ffff"></div>
<div class="a sw" style="left:153px;top:194px;background:#00c0ff"></div>
<div class="a sw" style="left:165px;top:194px;background:#00ffc0"></div>
<div class="a sw" style="left:177px;top:194px;background:#c0ff20"></div>
<div class="a sw" style="left:189px;top:194px;background:#ffc000"></div>
<div class="a sw" style="left:9px;top:206px;background:#c000ff"></div>
<div class="a sw" style="left:21px;top:206px;background:#ff00c0"></div>
<div class="a sw" style="left:33px;top:206px;background:#c0c0ff"></div>
<div class="a sw" style="left:45px;top:206px;background:#ff80c0"></div>
<div class="a sw" style="left:57px;top:206px;background:#c0ffc0"></div>
<div class="a sw" style="left:69px;top:206px;background:#ffc0ff"></div>
<div class="a sw" style="left:81px;top:206px;background:#fffacd"></div>
<div class="a sw" style="left:93px;top:206px;background:#c0ffff"></div>
<div class="a sw" style="left:105px;top:206px;background:#008020"></div>
<div class="a sw" style="left:117px;top:206px;background:#004080"></div>
<div class="a sw" style="left:129px;top:206px;background:#804000"></div>
<div class="a sw" style="left:141px;top:206px;background:#408020"></div>
<div class="a sw" style="left:153px;top:206px;background:#800040"></div>
<div class="a sw" style="left:165px;top:206px;background:#400080"></div>
<div class="a sw" style="left:177px;top:206px;background:#808040"></div>
<div class="a sw" style="left:189px;top:206px;background:#408080"></div>
<div class="a sw" style="left:9px;top:218px;background:#804080"></div>
<div class="a sw" style="left:21px;top:218px;background:#408040"></div>
<div class="a sw" style="left:33px;top:218px;background:#404080"></div>
<div class="a sw" style="left:45px;top:218px;background:#804040"></div>
<div class="a sw" style="left:57px;top:218px;background:#101040"></div>
<div class="a sw" style="left:69px;top:218px;background:#104010"></div>
<div class="a sw" style="left:81px;top:218px;background:#104018"></div>
<div class="a sw" style="left:93px;top:218px;background:#402018"></div>
<div class="a sw" style="left:105px;top:218px;background:#101040"></div>
<div class="a sw" style="left:117px;top:218px;background:#401020"></div>
<div class="a sw" style="left:129px;top:218px;background:#00ff40"></div>
<div class="a sw" style="left:141px;top:218px;background:#0040ff"></div>
<div class="a sw" style="left:153px;top:218px;background:#ff4020"></div>
<div class="a sw" style="left:165px;top:218px;background:#40ff20"></div>
<div class="a sw" style="left:177px;top:218px;background:#ff0040"></div>
<div class="a sw" style="left:189px;top:218px;background:#4000ff"></div>
</div></div>
<div class="a pnl" style="left:651px;top:367px;width:161px;height:346px;background:linear-gradient(#b9c9da 0,#b4c5d8 103px,#a3b8cf 104px,#8ba5c0 100%)"><div class="a cap"></div><div class="a hl"></div>
<span class="a" style="left:7px;top:6px;font:12.5px/15px 'Liberation Sans',sans-serif;color:#000;white-space:pre;transform-origin:0 0;transform:scaleX(1.0307);">Items</span>
<div class="a pclose" style="left:135px;top:4px"></div>
<svg style="left:141px;top:10px" width="7" height="7" viewBox="0 0 7 7"><path d="M0 .5h2.500l1 1.300 1-1.300h2.500l-2.300 3 2.300 3h-2.500l-1-1.400-1 1.400h-2.500l2.300-3z" fill="#fff" stroke="#3a4656" stroke-width=".9"/></svg>
<div class="a cl" style="left:5px;top:25px;width:149px;height:314px">
<div class="a" style="left:1px;top:1px;width:144px;height:169px;background:#fff;border:1px solid #828790"></div>
<svg style="left:8px;top:5px" width="8" height="13" viewBox="0 0 8 13"><path d="M.8 11.500l.8-3.200 3.400-7.300 2 1-3.400 7.300z" fill="#f4e800" stroke="#000" stroke-width="1"/><path d="M.8 11.500l.5-2.200 1.400.8z" fill="#000"/></svg>
<span class="a" style="left:21px;top:5px;font:11.5px/14px 'Liberation Serif',serif;color:#000;white-space:pre"><i style="position:absolute;left:0.15px;top:0;font-style:normal;transform-origin:0 0;transform:scaleX(0.743)">B</i><i style="position:absolute;left:6.45px;top:0;font-style:normal;transform-origin:0 0;transform:scaleX(1.000)">a</i><i style="position:absolute;left:12.45px;top:0;font-style:normal;transform-origin:0 0;transform:scaleX(1.000)">c</i><i style="position:absolute;left:18.15px;top:0;font-style:normal;transform-origin:0 0;transform:scaleX(0.991)">k</i><i style="position:absolute;left:24.15px;top:0;font-style:normal;transform-origin:0 0;transform:scaleX(0.991)">g</i><i style="position:absolute;left:31.09px;top:0;font-style:normal;transform-origin:0 0;transform:scaleX(1.000)">r</i><i style="position:absolute;left:36.15px;top:0;font-style:normal;transform-origin:0 0;transform:scaleX(0.991)">o</i><i style="position:absolute;left:42.15px;top:0;font-style:normal;transform-origin:0 0;transform:scaleX(0.991)">u</i><i style="position:absolute;left:48.15px;top:0;font-style:normal;transform-origin:0 0;transform:scaleX(0.991)">n</i><i style="position:absolute;left:54.15px;top:0;font-style:normal;transform-origin:0 0;transform:scaleX(0.991)">d</i></span>
<div class="a" style="left:3px;top:175px;width:12px;height:12px;background:linear-gradient(135deg,#dfe3e6,#fff);border:1px solid #8e8f8f"></div>
<span class="a" style="left:18px;top:174px;font:11.5px/14px 'Liberation Serif',serif;color:#000;white-space:pre"><i style="position:absolute;left:0.15px;top:0;font-style:normal;transform-origin:0 0;transform:scaleX(0.836)">T</i><i style="position:absolute;left:7.34px;top:0;font-style:normal;transform-origin:0 0;transform:scaleX(1.000)">r</i><i style="position:absolute;left:12.87px;top:0;font-style:normal;transform-origin:0 0;transform:scaleX(1.000)">a</i><i style="position:absolute;left:18.72px;top:0;font-style:normal;transform-origin:0 0;transform:scaleX(1.000)">n</i><i style="position:absolute;left:25.53px;top:0;font-style:normal;transform-origin:0 0;transform:scaleX(1.000)">s</i><i style="position:absolute;left:31.06px;top:0;font-style:normal;transform-origin:0 0;transform:scaleX(1.000)">p</i><i style="position:absolute;left:37.55px;top:0;font-style:normal;transform-origin:0 0;transform:scaleX(1.000)">a</i><i style="position:absolute;left:44.36px;top:0;font-style:normal;transform-origin:0 0;transform:scaleX(1.000)">r</i><i style="position:absolute;left:49.89px;top:0;font-style:normal;transform-origin:0 0;transform:scaleX(1.000)">e</i><i style="position:absolute;left:55.74px;top:0;font-style:normal;transform-origin:0 0;transform:scaleX(1.000)">n</i><i style="position:absolute;left:63.19px;top:0;font-style:normal;transform-origin:0 0;transform:scaleX(1.000)">t</i><i style="position:absolute;left:74.25px;top:0;font-style:normal;transform-origin:0 0;transform:scaleX(1.000)">b</i><i style="position:absolute;left:80.74px;top:0;font-style:normal;transform-origin:0 0;transform:scaleX(1.000)">a</i><i style="position:absolute;left:86.91px;top:0;font-style:normal;transform-origin:0 0;transform:scaleX(1.000)">c</i><i style="position:absolute;left:92.76px;top:0;font-style:normal;transform-origin:0 0;transform:scaleX(1.000)">k</i><i style="position:absolute;left:98.93px;top:0;font-style:normal;transform-origin:0 0;transform:scaleX(1.000)">g</i><i style="position:absolute;left:106.06px;top:0;font-style:normal;transform-origin:0 0;transform:scaleX(1.000)">r</i><i style="position:absolute;left:111.27px;top:0;font-style:normal;transform-origin:0 0;transform:scaleX(1.000)">o</i><i style="position:absolute;left:117.44px;top:0;font-style:normal;transform-origin:0 0;transform:scaleX(1.000)">u</i></span>
<div class="a btn" style="top:198px">
<span class="a" style="left:50.5px;top:0px;font:11.5px/14px 'Liberation Serif',serif;color:#838383;white-space:pre"><i style="position:absolute;left:0.15px;top:0;font-style:normal;transform-origin:0 0;transform:scaleX(0.686)">D</i><i style="position:absolute;left:6.45px;top:0;font-style:normal;transform-origin:0 0;transform:scaleX(1.000)">e</i><i style="position:absolute;left:13.40px;top:0;font-style:normal;transform-origin:0 0;transform:scaleX(1.000)">l</i><i style="position:absolute;left:18.45px;top:0;font-style:normal;transform-origin:0 0;transform:scaleX(1.000)">e</i><i style="position:absolute;left:25.40px;top:0;font-style:normal;transform-origin:0 0;transform:scaleX(1.000)">t</i><i style="position:absolute;left:30.45px;top:0;font-style:normal;transform-origin:0 0;transform:scaleX(1.000)">e</i></span>
</div>
<div class="a btn" style="top:213px">
<span class="a" style="left:17.5px;top:0px;font:11.5px/14px 'Liberation Serif',serif;color:#838383;white-space:pre"><i style="position:absolute;left:0.15px;top:0;font-style:normal;transform-origin:0 0;transform:scaleX(0.743)">C</i><i style="position:absolute;left:6.15px;top:0;font-style:normal;transform-origin:0 0;transform:scaleX(0.991)">o</i><i style="position:absolute;left:12.15px;top:0;font-style:normal;transform-origin:0 0;transform:scaleX(0.991)">n</i><i style="position:absolute;left:18.15px;top:0;font-style:normal;transform-origin:0 0;transform:scaleX(0.991)">v</i><i style="position:absolute;left:24.45px;top:0;font-style:normal;transform-origin:0 0;transform:scaleX(1.000)">e</i><i style="position:absolute;left:31.09px;top:0;font-style:normal;transform-origin:0 0;transform:scaleX(1.000)">r</i><i style="position:absolute;left:37.40px;top:0;font-style:normal;transform-origin:0 0;transform:scaleX(1.000)">t</i><i style="position:absolute;left:49.40px;top:0;font-style:normal;transform-origin:0 0;transform:scaleX(1.000)">t</i><i style="position:absolute;left:54.15px;top:0;font-style:normal;transform-origin:0 0;transform:scaleX(0.991)">o</i><i style="position:absolute;left:66.15px;top:0;font-style:normal;transform-origin:0 0;transform:scaleX(0.743)">B</i><i style="position:absolute;left:73.40px;top:0;font-style:normal;transform-origin:0 0;transform:scaleX(1.000)">i</i><i style="position:absolute;left:79.40px;top:0;font-style:normal;transform-origin:0 0;transform:scaleX(1.000)">t</i><i style="position:absolute;left:84.15px;top:0;font-style:normal;transform-origin:0 0;transform:scaleX(0.637)">m</i><i style="position:absolute;left:90.45px;top:0;font-style:normal;transform-origin:0 0;transform:scaleX(1.000)">a</i><i style="position:absolute;left:96.15px;top:0;font-style:normal;transform-origin:0 0;transform:scaleX(0.991)">p</i></span>
</div>
<div class="a btn" style="top:228px">
<span class="a" style="left:50.5px;top:0px;font:11.5px/14px 'Liberation Serif',serif;color:#838383;white-space:pre"><i style="position:absolute;left:0.15px;top:0;font-style:normal;transform-origin:0 0;transform:scaleX(0.743)">R</i><i style="position:absolute;left:6.45px;top:0;font-style:normal;transform-origin:0 0;transform:scaleX(1.000)">e</i><i style="position:absolute;left:12.76px;top:0;font-style:normal;transform-origin:0 0;transform:scaleX(1.000)">s</i><i style="position:absolute;left:19.40px;top:0;font-style:normal;transform-origin:0 0;transform:scaleX(1.000)">i</i><i style="position:absolute;left:24.45px;top:0;font-style:normal;transform-origin:0 0;transform:scaleX(1.000)">z</i><i style="position:absolute;left:30.45px;top:0;font-style:normal;transform-origin:0 0;transform:scaleX(1.000)">e</i></span>
</div>
<div class="a btn" style="top:243px">
<span class="a" style="left:41.5px;top:0px;font:11.5px/14px 'Liberation Serif',serif;color:#838383;white-space:pre"><i style="position:absolute;left:0.15px;top:0;font-style:normal;transform-origin:0 0;transform:scaleX(0.811)">E</i><i style="position:absolute;left:6.15px;top:0;font-style:normal;transform-origin:0 0;transform:scaleX(0.991)">d</i><i style="position:absolute;left:13.40px;top:0;font-style:normal;transform-origin:0 0;transform:scaleX(1.000)">i</i><i style="position:absolute;left:19.40px;top:0;font-style:normal;transform-origin:0 0;transform:scaleX(1.000)">t</i><i style="position:absolute;left:30.15px;top:0;font-style:normal;transform-origin:0 0;transform:scaleX(0.811)">T</i><i style="position:absolute;left:36.45px;top:0;font-style:normal;transform-origin:0 0;transform:scaleX(1.000)">e</i><i style="position:absolute;left:42.15px;top:0;font-style:normal;transform-origin:0 0;transform:scaleX(0.991)">x</i><i style="position:absolute;left:49.40px;top:0;font-style:normal;transform-origin:0 0;transform:scaleX(1.000)">t</i></span>
</div>
<div class="a btn" style="top:261px">
<span class="a" style="left:26.5px;top:0px;font:11.5px/14px 'Liberation Serif',serif;color:#838383;white-space:pre"><i style="position:absolute;left:0.15px;top:0;font-style:normal;transform-origin:0 0;transform:scaleX(0.743)">B</i><i style="position:absolute;left:7.09px;top:0;font-style:normal;transform-origin:0 0;transform:scaleX(1.000)">r</i><i style="position:absolute;left:13.40px;top:0;font-style:normal;transform-origin:0 0;transform:scaleX(1.000)">i</i><i style="position:absolute;left:18.15px;top:0;font-style:normal;transform-origin:0 0;transform:scaleX(0.991)">n</i><i style="position:absolute;left:24.15px;top:0;font-style:normal;transform-origin:0 0;transform:scaleX(0.991)">g</i><i style="position:absolute;left:37.40px;top:0;font-style:normal;transform-origin:0 0;transform:scaleX(1.000)">t</i><i style="position:absolute;left:42.15px;top:0;font-style:normal;transform-origin:0 0;transform:scaleX(0.991)">o</i><i style="position:absolute;left:54.15px;top:0;font-style:normal;transform-origin:0 0;transform:scaleX(0.891)">F</i><i style="position:absolute;left:61.09px;top:0;font-style:normal;transform-origin:0 0;transform:scaleX(1.000)">r</i><i style="position:absolute;left:66.15px;top:0;font-style:normal;transform-origin:0 0;transform:scaleX(0.991)">o</i><i style="position:absolute;left:72.15px;top:0;font-style:normal;transform-origin:0 0;transform:scaleX(0.991)">n</i><i style="position:absolute;left:79.40px;top:0;font-style:normal;transform-origin:0 0;transform:scaleX(1.000)">t</i></span>
</div>
<div class="a btn" style="top:276px">
<span class="a" style="left:32.5px;top:0px;font:11.5px/14px 'Liberation Serif',serif;color:#838383;white-space:pre"><i style="position:absolute;left:0.15px;top:0;font-style:normal;transform-origin:0 0;transform:scaleX(0.891)">S</i><i style="position:absolute;left:6.45px;top:0;font-style:normal;transform-origin:0 0;transform:scaleX(1.000)">e</i><i style="position:absolute;left:12.15px;top:0;font-style:normal;transform-origin:0 0;transform:scaleX(0.991)">n</i><i style="position:absolute;left:18.15px;top:0;font-style:normal;transform-origin:0 0;transform:scaleX(0.991)">d</i><i style="position:absolute;left:31.40px;top:0;font-style:normal;transform-origin:0 0;transform:scaleX(1.000)">t</i><i style="position:absolute;left:36.15px;top:0;font-style:normal;transform-origin:0 0;transform:scaleX(0.991)">o</i><i style="position:absolute;left:48.15px;top:0;font-style:normal;transform-origin:0 0;transform:scaleX(0.743)">B</i><i style="position:absolute;left:54.45px;top:0;font-style:normal;transform-origin:0 0;transform:scaleX(1.000)">a</i><i style="position:absolute;left:60.45px;top:0;font-style:normal;transform-origin:0 0;transform:scaleX(1.000)">c</i><i style="position:absolute;left:66.15px;top:0;font-style:normal;transform-origin:0 0;transform:scaleX(0.991)">k</i></span>
</div>
<div class="a btn" style="top:294px">
<span class="a" style="left:23.5px;top:0px;font:11.5px/14px 'Liberation Serif',serif;color:#838383;white-space:pre"><i style="position:absolute;left:0.15px;top:0;font-style:normal;transform-origin:0 0;transform:scaleX(0.557)">M</i><i style="position:absolute;left:6.45px;top:0;font-style:normal;transform-origin:0 0;transform:scaleX(1.000)">e</i><i style="position:absolute;left:13.09px;top:0;font-style:normal;transform-origin:0 0;transform:scaleX(1.000)">r</i><i style="position:absolute;left:18.15px;top:0;font-style:normal;transform-origin:0 0;transform:scaleX(0.991)">g</i><i style="position:absolute;left:24.45px;top:0;font-style:normal;transform-origin:0 0;transform:scaleX(1.000)">e</i><i style="position:absolute;left:36.15px;top:0;font-style:normal;transform-origin:0 0;transform:scaleX(0.686)">A</i><i style="position:absolute;left:43.40px;top:0;font-style:normal;transform-origin:0 0;transform:scaleX(1.000)">l</i><i style="position:absolute;left:49.40px;top:0;font-style:normal;transform-origin:0 0;transform:scaleX(1.000)">l</i><i style="position:absolute;left:61.09px;top:0;font-style:normal;transform-origin:0 0;transform:scaleX(1.000)">I</i><i style="position:absolute;left:67.40px;top:0;font-style:normal;transform-origin:0 0;transform:scaleX(1.000)">t</i><i style="position:absolute;left:72.45px;top:0;font-style:normal;transform-origin:0 0;transform:scaleX(1.000)">e</i><i style="position:absolute;left:78.15px;top:0;font-style:normal;transform-origin:0 0;transform:scaleX(0.637)">m</i><i style="position:absolute;left:84.76px;top:0;font-style:normal;transform-origin:0 0;transform:scaleX(1.000)">s</i></span>
</div>
</div></div>
<div id="wbtn" class="a"><div class="n" style="left:0;width:27px"></div><div class="s" style="left:27px"></div><div class="n" style="left:28px;width:26px"></div><div class="s" style="left:54px"></div><div class="c" style="left:55px;width:42px"></div></div>
<svg style="left:0;top:0" width="824" height="28" viewBox="0 0 824 28"><rect x="2.500" y="6.500" width="15" height="15" fill="#fff" stroke="#888"/><path d="M2.500 6.500h7" stroke="#50f050"/><path d="M9.500 6.500h3" stroke="#d0e040"/><path d="M12.500 6.500h5" stroke="#e0b070"/><path d="M17.500 6.500v8" stroke="#f09050"/><path d="M17.500 14.500v7" stroke="#e06060"/><path d="M17.500 21.500h-7" stroke="#c040c0"/><path d="M10.500 21.500h-8" stroke="#6060d0"/><path d="M2.500 21.500v-7" stroke="#50a0f0"/><path d="M2.500 14.500v-8" stroke="#50e0d0"/><path d="M5 11.500q0-.8.800-.8h1.500l1.200-1.400h4l1.200 1.400h.5q.8 0 .8.800v6.300q0 .8-.8.800h-8.400q-.8 0-.8-.8z" fill="#000"/><circle cx="10.700" cy="14.700" r="2.500" fill="#000" stroke="#a8a8a8" stroke-width=".9"/><rect x="737.500" y="9.500" width="10" height="3.500" fill="#fff" stroke="#4a5a72" stroke-width=".9"/><rect x="763.500" y="4.500" width="10.500" height="8.500" fill="#fff" stroke="#4a5a72" stroke-width=".9"/><rect x="766.500" y="7.500" width="4.500" height="2.500" fill="#7aa0d0" stroke="#4a5a72" stroke-width=".9"/><path d="M801 4.300h4l1.700 2.300 1.700-2.300h4l-3.700 4.400 3.700 4.500h-4l-1.700-2.400-1.700 2.400h-4l3.700-4.500z" fill="#fff" stroke="#5a3030" stroke-width=".9"/></svg>
</body></html>
